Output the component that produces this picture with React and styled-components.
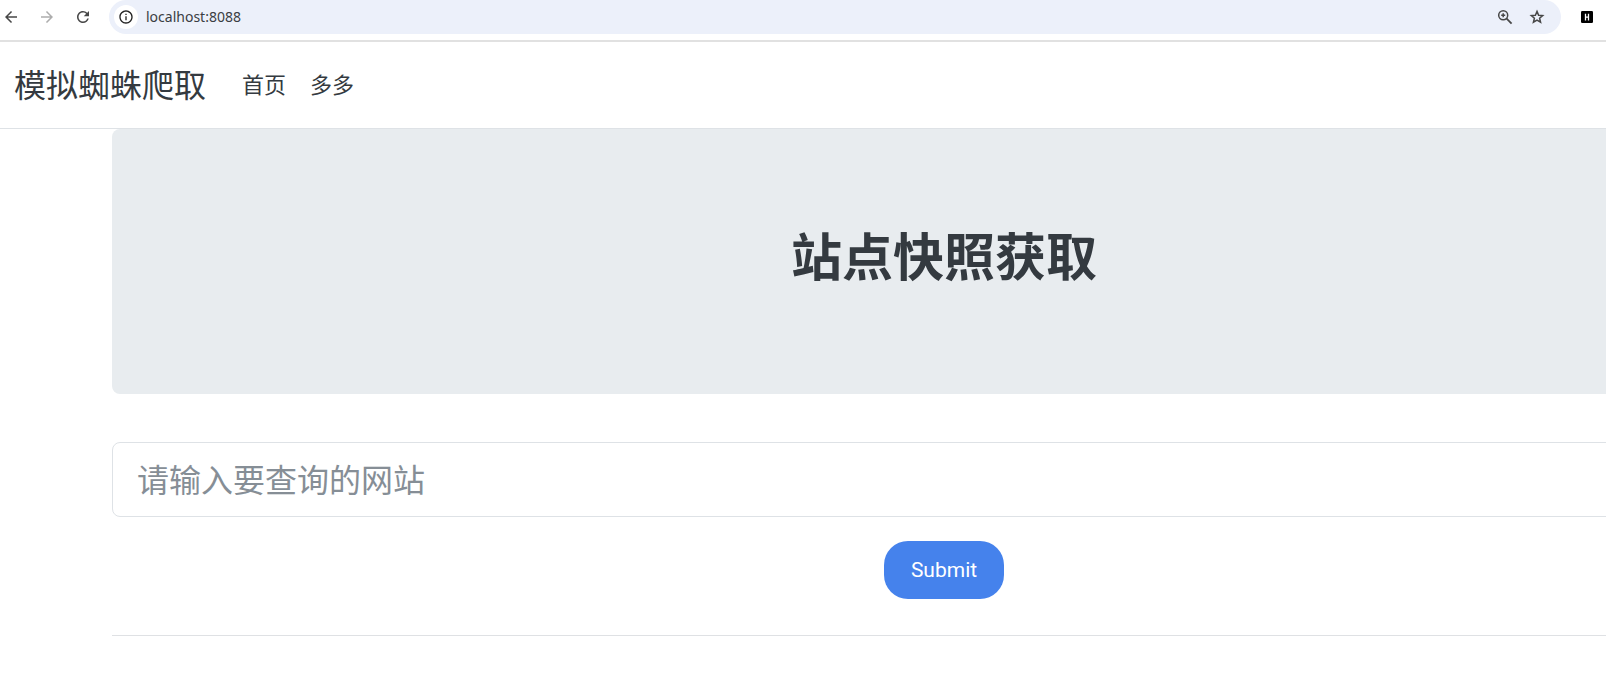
import styled, { createGlobalStyle } from "styled-components"
import { MdArrowBack, MdArrowForward, MdRefresh, MdInfoOutline } from "react-icons/md"

const GlobalStyle = createGlobalStyle`
    * {
        box-sizing: border-box;
    }

    body {
        margin: 0;
        overflow-x: hidden;
        background-color: white;
        color: #343a40;
        font-family: Roboto, "Noto Sans CJK SC", sans-serif;
    }
`

const BrowserBar = styled.div`
    height: 42px;
    padding: 0 10px 6px 2px;
    display: flex;
    align-items: center;
    border-bottom: 2px solid #e1e1e1;
`

const IconButton = styled.button`
    width: ${props => props.$size || 18}px;
    height: ${props => props.$size || 18}px;
    margin-right: ${props => props.$gap || 0}px;
    padding: 0;
    display: flex;
    flex-shrink: 0;
    align-items: center;
    justify-content: center;
    border: none;
    border-radius: 50%;
    background-color: ${props => props.$fill || 'transparent'};
    color: ${props => props.$color || '#474747'};
`

const AddressBar = styled.div`
    height: 34px;
    margin-right: 17px;
    padding: 0 15px 0 5px;
    flex: 1;
    display: flex;
    align-items: center;
    border-radius: 17px;
    background-color: #ecf0fa;
`

const Address = styled.input`
    min-width: 0;
    padding: 0 0 2px;
    flex: 1;
    border: none;
    outline: none;
    background: none;
    color: #3a3d42;
    font-family: "Noto Sans", sans-serif;
    font-size: 14px;
`

const Navbar = styled.nav`
    height: 87px;
    padding: 2px 14px 0;
    display: flex;
    align-items: center;
    border-bottom: 1px solid #dee2e6;
`

const Brand = styled.a`
    margin-right: 24px;
    color: #343a40;
    font-size: 32px;
    line-height: 48px;
    text-decoration: none;
`

const NavLink = styled.a`
    padding: 0 12px;
    color: #343a40;
    font-size: 22px;
    line-height: 32px;
    text-decoration: none;
`

// the content runs past the right edge of the window
const Container = styled.main`
    margin: 0 -170px 0 112px;
`

const Jumbotron = styled.header`
    height: 265px;
    margin-bottom: 48px;
    display: flex;
    align-items: center;
    justify-content: center;
    border-radius: 8px;
    background-color: #e8ecef;
`

const Title = styled.h1`
    margin: 0;
    padding-bottom: 6px;
    font-size: 51px;
    line-height: 64px;
    font-weight: 700;
`

const Form = styled.form`
    padding-bottom: 36px;
    display: flex;
    flex-direction: column;
    align-items: center;
    gap: 24px;
    border-bottom: 1px solid #dfe1e4;
`

const SiteInput = styled.input`
    width: 100%;
    height: 75px;
    padding: 2px 24px 0;
    border: 1px solid #dee2e6;
    border-radius: 8px;
    color: #343a40;
    font-family: inherit;
    font-size: 32px;

    &::placeholder {
        color: #868e96;
        opacity: 1;
    }
`

const Submit = styled.button`
    height: 58px;
    padding: 0 27px;
    border: none;
    border-radius: 24px;
    background-color: #4582ec;
    color: white;
    font-family: inherit;
    font-size: 21px;
`

function ZoomIcon() {
    return (
        <svg width="16" height="16" viewBox="0 0 16 16" fill="none" stroke="currentColor">
            <circle cx="6.2" cy="6.2" r="4.5" strokeWidth="1.5" />
            <path d="M9.4 9.4L14.6 14.6" strokeWidth="1.8" />
            <path d="M6.2 4.2v4M4.2 6.2h4" strokeWidth="1.5" />
        </svg>
    )
}

function StarIcon() {
    return (
        <svg width="18" height="18" viewBox="0 0 18 18" fill="none" stroke="currentColor" strokeWidth="1.5">
            <path d="M9 3.4l1.6 3.8 4.1.35-3.1 2.7.95 4L9 12.1l-3.55 2.15.95-4-3.1-2.7 4.1-.35z" />
        </svg>
    )
}

function ExtensionIcon() {
    return (
        <svg width="14" height="14" viewBox="0 0 14 14">
            <rect x="1" y="1" width="12" height="12" rx="1.2" fill="#000" />
            <path d="M5.5 3.8v6.6M8.5 3.8v6.6M5.5 7.1h3" fill="none" stroke="#fff" strokeWidth="1.3" />
        </svg>
    )
}

export default function App(){
    return(
        <>
            <GlobalStyle />
            <BrowserBar>
                <IconButton aria-label="Back" $gap={18}><MdArrowBack size={18} /></IconButton>
                <IconButton aria-label="Forward" $gap={18} $color="#adadad"><MdArrowForward size={18} /></IconButton>
                <IconButton aria-label="Reload" $gap={17}><MdRefresh size={18} /></IconButton>
                <AddressBar>
                    <IconButton aria-label="Site information" $size={24} $gap={8} $fill="white" $color="#222222">
                        <MdInfoOutline size={16} />
                    </IconButton>
                    <Address aria-label="Address" defaultValue="localhost:8088" />
                    <IconButton aria-label="Zoom" $gap={14}><ZoomIcon /></IconButton>
                    <IconButton aria-label="Bookmark"><StarIcon /></IconButton>
                </AddressBar>
                <IconButton aria-label="Extension"><ExtensionIcon /></IconButton>
            </BrowserBar>
            <Navbar>
                <Brand href="#">模拟蜘蛛爬取</Brand>
                <NavLink href="#">首页</NavLink>
                <NavLink href="#">多多</NavLink>
            </Navbar>
            <Container>
                <Jumbotron>
                    <Title>站点快照获取</Title>
                </Jumbotron>
                <Form onSubmit={e => e.preventDefault()}>
                    <SiteInput aria-label="网站" placeholder="请输入要查询的网站" />
                    <Submit type="submit">Submit</Submit>
                </Form>
            </Container>
        </>
    )
}
